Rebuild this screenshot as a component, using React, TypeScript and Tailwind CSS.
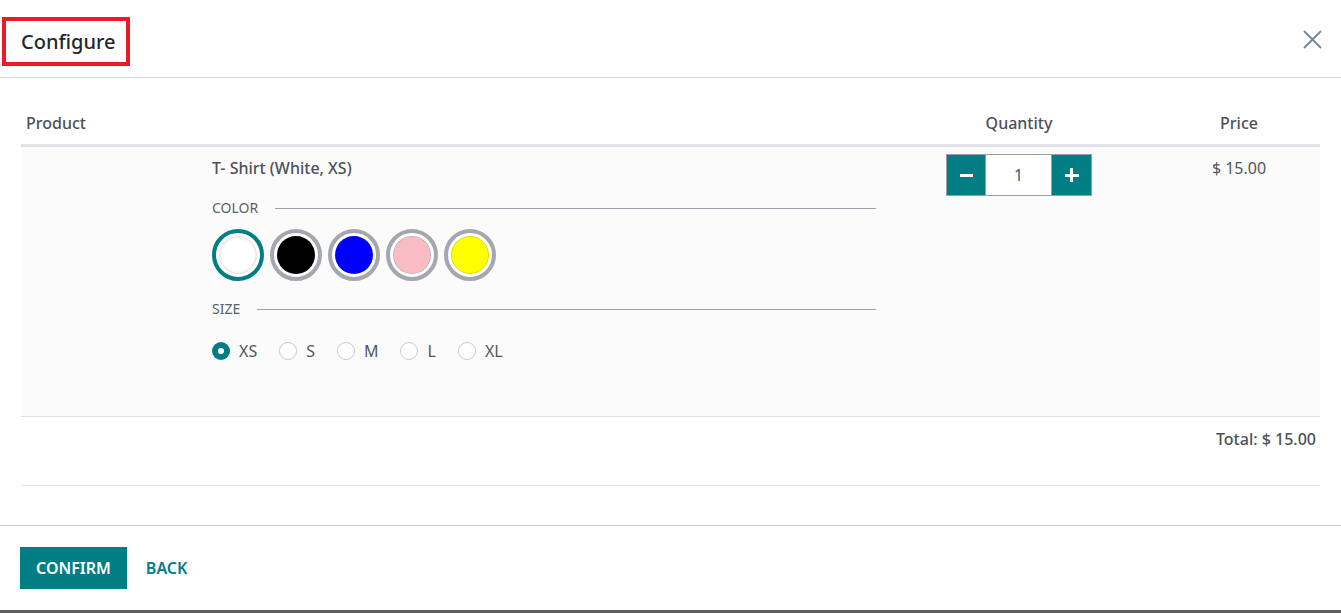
import { useState } from 'react';

const COLORS = [
  { name: 'White', hex: '#ffffff', edge: 'border border-[#e3e3e3] shadow-[inset_0_0_3px_rgba(0,0,0,0.12)]' },
  { name: 'Black', hex: '#000000', edge: '' },
  { name: 'Blue', hex: '#0000ff', edge: '' },
  { name: 'Pink', hex: '#f8bcc2', edge: 'border border-dotted border-[#9aa3ad]' },
  { name: 'Yellow', hex: '#ffff00', edge: 'border border-[#e0d800]' },
];

const SIZES = ['XS', 'S', 'M', 'L', 'XL'];

function AttrHeading({ label }: { label: string }) {
  return (
    <div className="flex items-center gap-[17px] text-[14px] leading-5 text-[#5b6169]">
      <span>{label}</span>
      <span className="h-px flex-1 bg-[#9ca2ab]" />
    </div>
  );
}

export default function App() {
  const [color, setColor] = useState('White');
  const [size, setSize] = useState('XS');
  const [qty, setQty] = useState(1);

  return (
    <div
      className="flex h-[613px] w-full flex-col bg-white text-[#4c5157]"
      style={{ fontFamily: '"Noto Sans", "Open Sans", sans-serif' }}
    >
      <header className="flex h-[78px] shrink-0 items-start justify-between border-b border-[#cfcfd2]">
        <h4 className="ml-[2px] mt-[17px] flex h-[49px] items-center border-4 border-[#ed1c24] pl-[15px] pr-[11px] text-[20px] font-medium text-[#23282d]">
          Configure
        </h4>
        <button type="button" aria-label="Close" className="mr-[19px] mt-[29px] grid h-[20px] w-[20px] place-items-center">
          <svg width="19" height="19" viewBox="0 0 19 19" fill="none" stroke="#6d8b8e" strokeWidth="1.8">
            <path d="M1 1 18 18M18 1 1 18" />
          </svg>
        </button>
      </header>

      <main className="flex-1 px-[21px] pt-[23px]">
        {/* table head */}
        <div className="flex h-[46px] items-center border-b-[3px] border-[#e1e2e5] text-[16px] font-medium text-[#4c5157]">
          <div className="w-[879px] pl-[5px]">Product</div>
          <div className="w-[238px] text-center">Quantity</div>
          <div className="w-[20px]" />
          <div className="w-[162px] text-center">Price</div>
        </div>

        {/* product line */}
        <div className="flex h-[270px] border-b border-[#e1e2e5] bg-[#fbfbfb]">
          <div className="w-[879px] pl-[191px] pt-[9px]">
            <div className="w-[664px]">
              <div className="text-[16px] font-medium leading-6">T- Shirt (White, XS)</div>

              <div className="mt-[18px]">
                <AttrHeading label="COLOR" />
                <div className="mt-[11px] flex gap-[6px]">
                  {COLORS.map((c) => (
                    <button
                      key={c.name}
                      type="button"
                      title={c.name}
                      onClick={() => setColor(c.name)}
                      className={`grid h-[52px] w-[52px] place-items-center rounded-full border-4 bg-white ${
                        color === c.name ? 'border-[#017e84]' : 'border-[#a4a7ae]'
                      }`}
                    >
                      <span
                        className={`block h-[38px] w-[38px] rounded-full ${c.edge}`}
                        style={{ backgroundColor: c.hex }}
                      />
                    </button>
                  ))}
                </div>
              </div>

              <div className="mt-[18px]">
                <AttrHeading label="SIZE" />
                <div className="mt-[20px] flex gap-[22px] text-[16px] leading-6">
                  {SIZES.map((s) => (
                    <label key={s} className="flex cursor-pointer items-center gap-[9px]" onClick={() => setSize(s)}>
                      {size === s ? (
                        <span className="grid h-[18px] w-[18px] place-items-center rounded-full bg-[#017e84]">
                          <span className="h-[6px] w-[6px] rounded-full bg-white" />
                        </span>
                      ) : (
                        <span className="h-[18px] w-[18px] rounded-full border border-[#c7cbd0] bg-white" />
                      )}
                      <span className="text-[#50565c]">{s}</span>
                    </label>
                  ))}
                </div>
              </div>
            </div>
          </div>

          <div className="flex w-[238px] justify-center pt-[7px]">
            <div className="flex h-[42px]">
              <button
                type="button"
                onClick={() => setQty((q) => Math.max(1, q - 1))}
                className="grid w-[40px] place-items-center border border-[#9aa0a6] bg-[#017e84]"
              >
                <span className="h-[3px] w-[13px] bg-white" />
              </button>
              <div className="grid w-[65px] place-items-center border-y border-[#9aa0a6] bg-white text-[16px] text-[#50565c]">
                {qty}
              </div>
              <button
                type="button"
                onClick={() => setQty((q) => q + 1)}
                className="relative grid w-[41px] place-items-center border border-[#9aa0a6] bg-[#017e84]"
              >
                <span className="absolute h-[3px] w-[14px] bg-white" />
                <span className="absolute h-[14px] w-[3px] bg-white" />
              </button>
            </div>
          </div>
          <div className="w-[20px]" />
          <div className="w-[162px] pt-[9px] text-center text-[16px] leading-6 text-[#50565c]">$ 15.00</div>
        </div>

        {/* total */}
        <div className="flex h-[69px] justify-end border-b border-[#e1e2e5] pr-[4px] pt-[10px] text-[16px] font-medium leading-6">
          Total: $ 15.00
        </div>
      </main>

      <footer className="flex h-[85px] shrink-0 items-start gap-[19px] border-t border-[#c9c9cf] px-[20px] pt-[21px]">
        <button
          type="button"
          className="h-[42px] bg-[#017e84] px-[16px] text-[16px] font-semibold uppercase text-white"
        >
          Confirm
        </button>
        <button type="button" className="h-[42px] text-[16px] font-semibold uppercase text-[#017e84]">
          Back
        </button>
      </footer>
      <div className="h-[3px] shrink-0 bg-[#5f5f5f]" />
    </div>
  );
}
